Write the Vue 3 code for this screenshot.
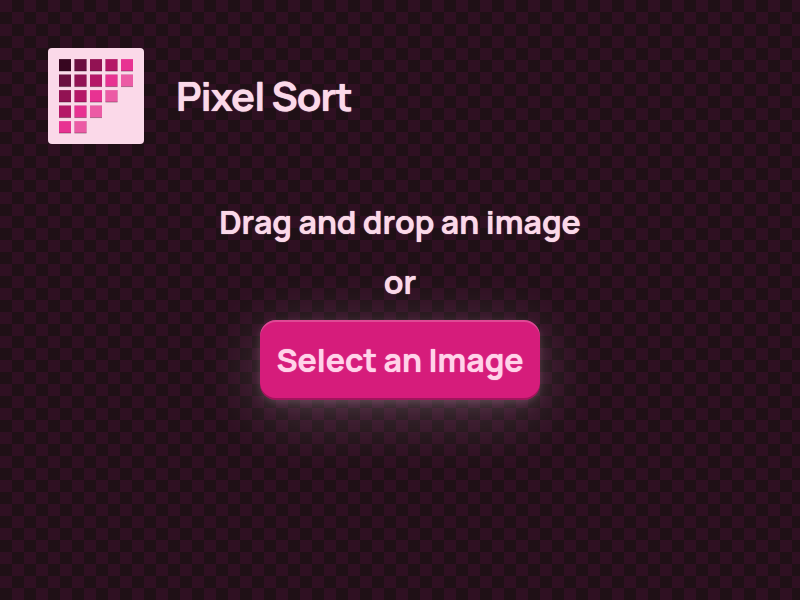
<script setup>
const colours = ['#370620', '#6b0f40', '#921253', '#b51767', '#e83292', '#ec5ba5']
const rows = [
  [0, 1, 2, 3, 4],
  [1, 2, 3, 4, 5],
  [2, 3, 4, 5],
  [3, 4, 5],
  [4, 5],
]
const pitch = 15.5
const squares = rows.flatMap((row, y) =>
  row.map((shade, x) => ({ x: 11 + x * pitch, y: 11 + y * pitch, fill: colours[shade] })),
)
</script>

<template>
  <div class="page">
    <header class="header">
      <svg class="logo" viewBox="0 0 96 96" aria-hidden="true">
        <rect width="96" height="96" rx="4" fill="#fbd9e9" />
        <g v-for="s in squares" :key="`${s.x}-${s.y}`">
          <rect :x="s.x" :y="s.y" width="12" height="12.6" fill="#000" opacity="0.3" />
          <rect :x="s.x" :y="s.y" width="12" height="12" :fill="s.fill" />
          <rect :x="s.x" :y="s.y" width="12" height="0.5" fill="#fff" opacity="0.2" />
          <rect :x="s.x" :y="s.y + 11.5" width="12" height="0.5" fill="#000" opacity="0.25" />
        </g>
      </svg>
      <h1 class="title">Pixel Sort</h1>
    </header>
    <main class="drop">
      <p class="line">Drag and drop an image</p>
      <p class="line">or</p>
      <button class="select" type="button">Select an Image</button>
    </main>
  </div>
</template>

<style>
body {
  background: repeating-conic-gradient(#1f1016 0 25%, #2f1022 0 50%) 0 0 / 24px 24px;
}
</style>

<style scoped>
.page {
  box-sizing: border-box;
  min-height: 100vh;
  padding: 48px;
  color: #fbd9e9;
  font-family: Manrope, Inter, "Liberation Sans", sans-serif;
  text-shadow: 0 0 1px currentColor;
}
.header {
  display: flex;
  align-items: center;
  gap: 32px;
}
.logo {
  flex: none;
  width: 96px;
  height: 96px;
}
.title {
  margin: 0;
  font-size: 40px;
  line-height: 48px;
  font-weight: 700;
  letter-spacing: -1px;
}
.drop {
  display: flex;
  flex-direction: column;
  align-items: center;
  padding-top: 48px;
}
.line {
  margin: 0;
  font-size: 32px;
  line-height: 60px;
  font-weight: 700;
  text-align: center;
}
.select {
  margin: 8px 0 0;
  padding: 16px;
  border: 0;
  border-radius: 16px;
  background: #d61c7b;
  color: #ffd3e9;
  font: inherit;
  font-size: 32px;
  line-height: 48px;
  font-weight: 700;
  text-shadow: inherit;
  cursor: pointer;
  box-shadow:
    inset 0 2px 0 rgb(255 255 255 / 20%),
    inset 0 -2px 0 rgb(0 0 0 / 25%),
    0 2px 6px rgb(251 217 233 / 12%),
    0 6px 16px rgb(251 217 233 / 8%),
    0 12px 64px rgb(251 217 233 / 20%);
}
</style>
